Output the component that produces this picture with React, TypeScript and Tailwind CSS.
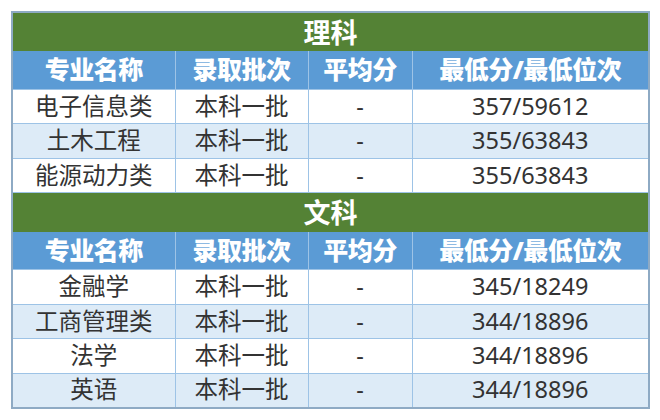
import { Fragment } from 'react'

const sections = [
  {
    title: '理科',
    rows: [
      ['电子信息类', '本科一批', '-', '357/59612'],
      ['土木工程', '本科一批', '-', '355/63843'],
      ['能源动力类', '本科一批', '-', '355/63843'],
    ],
  },
  {
    title: '文科',
    rows: [
      ['金融学', '本科一批', '-', '345/18249'],
      ['工商管理类', '本科一批', '-', '344/18896'],
      ['法学', '本科一批', '-', '344/18896'],
      ['英语', '本科一批', '-', '344/18896'],
    ],
  },
]

const headers = ['专业名称', '录取批次', '平均分', '最低分/最低位次']

export default function App() {
  return (
    <div className="w-[660px] h-[420px] bg-white pt-[11px] pl-[11px] font-['Noto_Sans','Noto_Sans_CJK_SC',sans-serif]">
      <table className="border-collapse border-2 border-[#8eaac4] table-fixed w-[637px]">
        <colgroup>
          <col className="w-[163px]" />
          <col className="w-[133px]" />
          <col className="w-[104px]" />
          <col className="w-[237px]" />
        </colgroup>
        <tbody>
          {sections.map((s) => (
            <Fragment key={s.title}>
              <tr className="h-[39px] bg-[#548235]">
                <td colSpan={4} className="text-center text-white font-bold text-[27px] leading-none">
                  {s.title}
                </td>
              </tr>
              <tr className="h-[38px] bg-[#5b9bd5]">
                {headers.map((h) => (
                  <td key={h} className="border-x border-[#9dc3e6] text-center text-white font-black text-[25px] leading-none tracking-[-0.5px]">
                    {h}
                  </td>
                ))}
              </tr>
              {s.rows.map((r, i) => (
                <tr key={r[0]} className={i % 2 === 0 ? 'h-[34.5px] bg-white' : 'h-[34.5px] bg-[#ddebf7]'}>
                  {r.map((c, j) => (
                    <td key={j} className="border border-[#9dc3e6] text-center text-[#333] text-[23.5px] leading-none">
                      {c}
                    </td>
                  ))}
                </tr>
              ))}
            </Fragment>
          ))}
        </tbody>
      </table>
    </div>
  )
}
